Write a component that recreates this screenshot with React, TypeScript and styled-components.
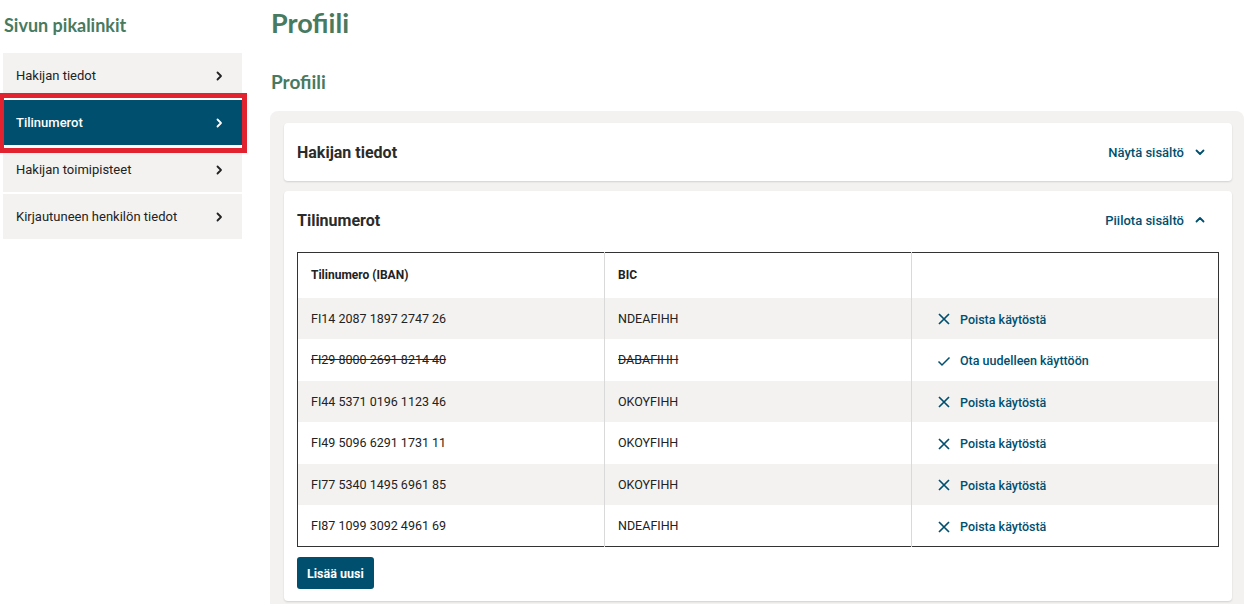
import React from "react";
import styled, { createGlobalStyle } from "styled-components";

const GlobalStyle = createGlobalStyle`
  html, body {
    margin: 0;
    padding: 0;
    background: #ffffff;
    font-family: Roboto, "Liberation Sans", sans-serif;
    color: #222222;
  }
  * { box-sizing: border-box; }
`;

const green = "#487a60";
const blue = "#004f6e";
const grey = "#f3f2f1";

const Page = styled.div`
  display: flex;
  align-items: flex-start;
  gap: 23px;
  width: 1248px;
  height: 604px;
  overflow: hidden;
`;

const Sidebar = styled.nav`
  width: 247px;
  flex-shrink: 0;
  padding: 12px 5px 0 3px;
`;

const SideTitle = styled.h2`
  margin: 0 0 15px 1px;
  font-family: Lato, "Noto Sans", sans-serif;
  font-size: 18px;
  font-weight: 700;
  line-height: 26px;
  color: ${green};
`;

const SideList = styled.ul`
  list-style: none;
  margin: 0;
  padding: 0;
  display: flex;
  flex-direction: column;
  gap: 2px;
`;

const SideLink = styled.a<{ $active?: boolean }>`
  position: relative;
  display: flex;
  align-items: center;
  justify-content: space-between;
  height: 45px;
  padding: 0 17px 0 13px;
  background: ${(p) => (p.$active ? blue : grey)};
  color: ${(p) => (p.$active ? "#fff" : "#222")};
  font-size: 13px;
  font-weight: ${(p) => (p.$active ? 500 : 400)};
  text-decoration: none;
  z-index: ${(p) => (p.$active ? 1 : 0)};
  box-shadow: ${(p) => (p.$active ? "0 -2px 0 #fff, 0 3px 0 #fff" : "none")};

  &::after {
    content: "";
    display: ${(p) => (p.$active ? "block" : "none")};
    position: absolute;
    top: -7px;
    bottom: -8px;
    left: -3px;
    right: -5px;
    border: 5px solid #e0232e;
    border-left-width: 4px;
    pointer-events: none;
  }
`;

const Main = styled.main`
  flex: 1;
  padding-right: 4px;
`;

const PageTitle = styled.h1`
  margin: 6px 0 0 1px;
  font-family: Lato, "Noto Sans", sans-serif;
  font-size: 27px;
  font-weight: 700;
  line-height: 34px;
  color: ${green};
`;

const SectionTitle = styled.h2`
  margin: 30px 0 0 1px;
  font-family: Lato, "Noto Sans", sans-serif;
  font-size: 19px;
  font-weight: 700;
  line-height: 24px;
  color: ${green};
`;

const Panel = styled.section`
  margin-top: 17px;
  background: ${grey};
  border-radius: 8px;
  padding: 12px 12px 14px 14px;
  display: flex;
  flex-direction: column;
  gap: 10px;
`;

const Card = styled.div<{ $open?: boolean }>`
  background: #fff;
  border-radius: 4px;
  box-shadow: 0 1px 2px rgba(0, 0, 0, 0.14);
  padding: ${(p) => (p.$open ? "0 13px 12px 13px" : "0 13px")};
`;

const CardHeader = styled.div`
  display: flex;
  align-items: center;
  justify-content: space-between;
  height: 58px;
`;

const CardTitle = styled.h3`
  margin: 0;
  font-size: 16px;
  font-weight: 700;
  color: #2b2b2b;
`;

const Toggle = styled.button`
  display: flex;
  align-items: center;
  gap: 10px;
  border: none;
  background: none;
  padding: 0 13px 0 0;
  font-family: Roboto, "Liberation Sans", sans-serif;
  font-size: 13px;
  font-weight: 500;
  color: ${blue};
  cursor: pointer;
`;

const Table = styled.table`
  width: 100%;
  border-collapse: collapse;
  border: 1px solid #333;
  table-layout: fixed;
  margin-top: 3px;
`;

const Th = styled.th`
  height: 45px;
  padding: 0 13px;
  text-align: left;
  font-size: 12px;
  font-weight: 700;
  color: #222;
  border-left: 1px solid #d9d9d9;
  &:first-child { border-left: none; }
`;

const Row = styled.tr<{ $shade?: boolean }>`
  background: ${(p) => (p.$shade ? grey : "#fff")};
`;

const Td = styled.td<{ $struck?: boolean }>`
  height: 41.5px;
  padding: 0 13px;
  font-size: 12.5px;
  color: #222;
  text-decoration: ${(p) => (p.$struck ? "line-through" : "none")};
  border-left: 1px solid #d9d9d9;
  &:first-child { border-left: none; }
`;

const ActionCell = styled.td`
  height: 41.5px;
  padding: 2px 0 0 25px;
  border-left: 1px solid #d9d9d9;
`;

const Action = styled.a`
  display: flex;
  align-items: center;
  gap: 9px;
  font-size: 12.5px;
  font-weight: 500;
  color: ${blue};
  text-decoration: none;
  cursor: pointer;
`;

const AddButton = styled.button`
  margin-top: 10px;
  height: 32px;
  padding: 0 10px;
  border: none;
  border-radius: 3px;
  background: ${blue};
  color: #fff;
  font-family: Roboto, "Liberation Sans", sans-serif;
  font-size: 12.5px;
  font-weight: 700;
  cursor: pointer;
`;

const Chevron = ({ dir, color }: { dir: "right" | "down" | "up"; color: string }) => {
  const d =
    dir === "right" ? "M4.5 2.5 8 6l-3.5 3.5" : dir === "down" ? "M2.5 4.5 6 8l3.5-3.5" : "M2.5 7.5 6 4l3.5 3.5";
  return (
    <svg width="12" height="12" viewBox="0 0 12 12" fill="none">
      <path d={d} stroke={color} strokeWidth="1.8" strokeLinecap="round" strokeLinejoin="round" />
    </svg>
  );
};

const XIcon = () => (
  <svg width="14" height="14" viewBox="0 0 14 14" fill="none">
    <path d="M2 2l10 10M12 2 2 12" stroke={blue} strokeWidth="1.7" />
  </svg>
);

const CheckIcon = () => (
  <svg width="14" height="14" viewBox="0 0 14 14" fill="none">
    <path d="M1.5 7.5 5 11l7.5-7.5" stroke={blue} strokeWidth="1.5" />
  </svg>
);

const links = ["Hakijan tiedot", "Tilinumerot", "Hakijan toimipisteet", "Kirjautuneen henkilön tiedot"];

const accounts = [
  { iban: "FI14 2087 1897 2747 26", bic: "NDEAFIHH", active: true },
  { iban: "FI29 8000 2691 8214 40", bic: "DABAFIHH", active: false },
  { iban: "FI44 5371 0196 1123 46", bic: "OKOYFIHH", active: true },
  { iban: "FI49 5096 6291 1731 11", bic: "OKOYFIHH", active: true },
  { iban: "FI77 5340 1495 6961 85", bic: "OKOYFIHH", active: true },
  { iban: "FI87 1099 3092 4961 69", bic: "NDEAFIHH", active: true },
];

export default function App() {
  return (
    <>
      <GlobalStyle />
      <Page>
        <Sidebar>
          <SideTitle>Sivun pikalinkit</SideTitle>
          <SideList>
            {links.map((l, i) => (
              <li key={l}>
                <SideLink href="#" $active={i === 1}>
                  {l}
                  <Chevron dir="right" color={i === 1 ? "#fff" : "#222"} />
                </SideLink>
              </li>
            ))}
          </SideList>
        </Sidebar>
        <Main>
          <PageTitle>Profiili</PageTitle>
          <SectionTitle>Profiili</SectionTitle>
          <Panel>
            <Card>
              <CardHeader>
                <CardTitle>Hakijan tiedot</CardTitle>
                <Toggle>
                  Näytä sisältö <Chevron dir="down" color={blue} />
                </Toggle>
              </CardHeader>
            </Card>
            <Card $open>
              <CardHeader>
                <CardTitle>Tilinumerot</CardTitle>
                <Toggle>
                  Piilota sisältö <Chevron dir="up" color={blue} />
                </Toggle>
              </CardHeader>
              <Table>
                <thead>
                  <tr>
                    <Th>Tilinumero (IBAN)</Th>
                    <Th>BIC</Th>
                    <Th />
                  </tr>
                </thead>
                <tbody>
                  {accounts.map((a, i) => (
                    <Row key={a.iban} $shade={i % 2 === 0}>
                      <Td $struck={!a.active}>{a.iban}</Td>
                      <Td $struck={!a.active}>{a.bic}</Td>
                      <ActionCell>
                        <Action>
                          {a.active ? <XIcon /> : <CheckIcon />}
                          {a.active ? "Poista käytöstä" : "Ota uudelleen käyttöön"}
                        </Action>
                      </ActionCell>
                    </Row>
                  ))}
                </tbody>
              </Table>
              <AddButton>Lisää uusi</AddButton>
            </Card>
          </Panel>
        </Main>
      </Page>
    </>
  );
}
